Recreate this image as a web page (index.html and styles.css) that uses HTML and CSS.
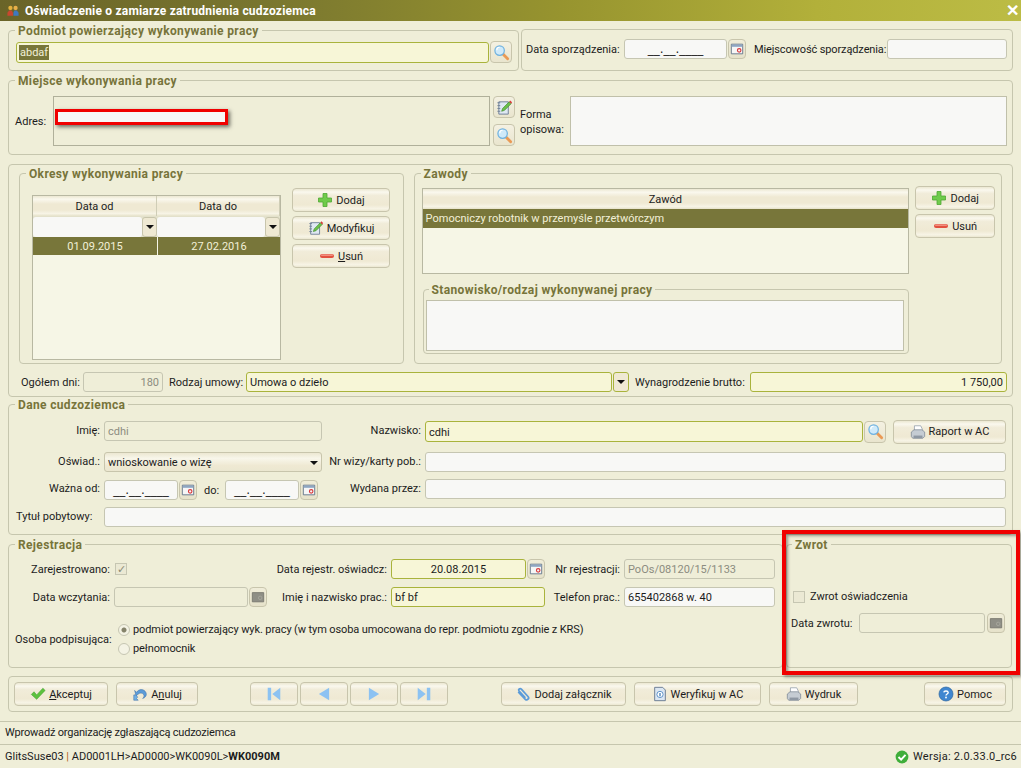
FILE: index.html
```html
<!DOCTYPE html>
<html lang="pl">

<head>
    <meta charset="UTF-8">
    <title>Oświadczenie o zamiarze zatrudnienia cudzoziemca</title>
    <link rel="stylesheet" href="styles.css">
</head>

<body>
    <svg class="defs" xmlns="http://www.w3.org/2000/svg">
        <symbol id="i-search" viewBox="0 0 18 18">
            <path d="M10.500 10.500l5 5" stroke="#ea9a55" stroke-width="3" stroke-linecap="round"/>
            <circle cx="7" cy="7" r="5" fill="#cfeafa" stroke="#6fb2e0" stroke-width="1.300"/>
            <path d="M4 6.500a3 3 0 0 1 3-3" fill="none" stroke="#fff" stroke-width="1.200"/>
        </symbol>
        <symbol id="i-edit" viewBox="0 0 18 18">
            <path d="M3 3h10v13H3z" fill="#dfe8f2" stroke="#6f7f96"/>
            <path d="M1.500 4h3M1.500 7h3M1.500 10h3M1.500 13h3" stroke="#6f7f96"/>
            <path d="M6 13l1-3 7-7 2 2-7 7z" fill="#6cc04a" stroke="#3d8a2a" stroke-width=".7"/>
            <path d="M14 3l1-1.500 2 2-1 1.500z" fill="#d9383a"/>
        </symbol>
        <symbol id="i-cal" viewBox="0 0 16 16">
            <path d="M1.500 2.500h13v11h-13z" fill="#f6f6f6" stroke="#5c6f86"/>
            <path d="M2 3h12v2.500H2z" fill="#8ea6c2"/>
            <circle cx="10.500" cy="9.500" r="2" fill="none" stroke="#d9383a" stroke-width="1.300"/>
        </symbol>
        <symbol id="i-cal-off" viewBox="0 0 16 16">
            <path d="M1.500 3h13v10.500h-13z" fill="#8f8f86" stroke="#77776e"/>
            <circle cx="10.500" cy="9" r="2" fill="none" stroke="#a8a89e"/>
        </symbol>
        <symbol id="i-plus" viewBox="0 0 16 16">
            <path d="M6 1.500h4v4.500h4.500v4H10v4.500H6V10H1.500V6H6z" fill="#6fcb4b" stroke="#4ea732" stroke-width=".8"/>
        </symbol>
        <symbol id="i-minus" viewBox="0 0 16 16">
            <rect x="1" y="6" width="14" height="4" rx="2" fill="#e2503f"/>
            <rect x="2" y="6.500" width="12" height="1.200" rx=".6" fill="#f6a394"/>
        </symbol>
        <symbol id="i-print" viewBox="0 0 18 18">
            <path d="M5 2h7l2 4v3H5z" fill="#fff" stroke="#8a97a5" stroke-width=".8"/>
            <path d="M1.500 9l3-2.500h9l3 2.500v5l-2 2H3l-1.500-2z" fill="#c5ccd3" stroke="#78838f" stroke-width=".8"/>
            <path d="M4 13h10v3H4z" fill="#8e98a3"/>
        </symbol>
        <symbol id="i-check" viewBox="0 0 18 18">
            <path d="M1.500 9.500l3-3 3 3.500 7-7.500 2.500 2.500-9.500 10z" fill="#5cc23e" stroke="#3f9a2a" stroke-width=".6"/>
        </symbol>
        <symbol id="i-undo" viewBox="0 0 18 18">
            <path d="M3 5l1.500 6 2-1.500c2-2 5-2 6.500 0 1 1.500.5 3-1 4.500 3.500-1 5-4 3.500-7C13.500 3.500 9 3 6 6L5 7z" fill="#5b9bd8" stroke="#386ea8" stroke-width=".6"/>
            <path d="M2 10v6h5l-2-2 1.500-1.500L4 10z" fill="#6fb0e6" stroke="#386ea8" stroke-width=".6"/>
        </symbol>
        <symbol id="i-first" viewBox="0 0 14 14">
            <path d="M1.500 1.500h3v11h-3zM12.500 1.500v11L5.500 7z" fill="#8cc2f2"/>
        </symbol>
        <symbol id="i-prev" viewBox="0 0 14 14">
            <path d="M11.500 1.500v11L2.500 7z" fill="#8cc2f2"/>
        </symbol>
        <symbol id="i-next" viewBox="0 0 14 14">
            <path d="M2.500 1.500v11l9-5.500z" fill="#8cc2f2"/>
        </symbol>
        <symbol id="i-last" viewBox="0 0 14 14">
            <path d="M9.500 1.500h3v11h-3zM1.500 1.500v11L8.500 7z" fill="#8cc2f2"/>
        </symbol>
        <symbol id="i-clip" viewBox="0 0 18 18">
            <path d="M2.500 6.500l8 8.500c2 1.800 5 -1 3 -3.200L6 3.500C4.500 2 2 4 3.500 5.800l7 7.500" fill="none" stroke="#5b9bd8" stroke-width="2"/>
        </symbol>
        <symbol id="i-info" viewBox="0 0 18 18">
            <path d="M3 1.500h9l3 3v12H3z" fill="#dbe6f2" stroke="#62758c"/>
            <circle cx="9" cy="9.500" r="3.500" fill="#fff" stroke="#4f89c4"/>
            <path d="M9 8v3.500" stroke="#2f6cab" stroke-width="1.300"/>
        </symbol>
        <symbol id="i-help" viewBox="0 0 16 16">
            <circle cx="8" cy="8" r="7" fill="#3f86d0" stroke="#2a649f" stroke-width=".7"/>
            <path d="M5.800 6.300C6 4.500 10 4.500 10.200 6.500 10.300 8 8 8 8 9.500" fill="none" stroke="#fff" stroke-width="1.400"/>
            <circle cx="8" cy="11.500" r=".9" fill="#fff"/>
        </symbol>
        <symbol id="i-ok" viewBox="0 0 16 16">
            <circle cx="8" cy="8" r="7.300" fill="#3fae3a"/>
            <path d="M4 8l3 3 5-5.500" fill="none" stroke="#fff" stroke-width="2.200"/>
        </symbol>
        <symbol id="i-users" viewBox="0 0 14 14">
            <circle cx="4" cy="3.500" r="2.500" fill="#e3b03c"/>
            <circle cx="10" cy="3.500" r="2.500" fill="#e8b04a"/>
            <path d="M0.500 12.500V9l2-2.500h3L7 9v3.500z" fill="#c9472f"/>
            <path d="M7.500 12.500V9l1-2.500h3L13.500 9v3.500z" fill="#3f78c0"/>
        </symbol>
    </svg>

    <div class="titlebar">
        <svg class="title-icon"><use href="#i-users"/></svg>
        <span class="title-text">Oświadczenie o zamiarze zatrudnienia cudzoziemca</span>
        <span class="title-close">✕</span>
    </div>

    <div class="main">
        <div class="top-row">
            <fieldset class="group podmiot">
                <legend>Podmiot powierzający wykonywanie pracy</legend>
                <div class="flex-row">
                    <div class="field req grow"><span class="selected-text">abdaf</span></div>
                    <button class="icon-btn"><svg><use href="#i-search"/></svg></button>
                </div>
            </fieldset>
            <div class="group data-box">
                <label class="lbl-plain">Data sporządzenia:</label>
                <div class="field mask w-103">__.__.____</div>
                <button class="cal-btn"><svg><use href="#i-cal"/></svg></button>
                <label class="lbl-plain miejsc-label">Miejscowość sporządzenia:</label>
                <div class="field grow"></div>
            </div>
        </div>

        <fieldset class="group miejsce">
            <legend>Miejsce wykonywania pracy</legend>
            <div class="miejsce-grid">
                <label class="lbl-plain">Adres:</label>
                <div class="address-box"></div>
                <div class="address-btns">
                    <button class="icon-btn"><svg><use href="#i-edit"/></svg></button>
                    <button class="icon-btn"><svg><use href="#i-search"/></svg></button>
                </div>
                <label class="lbl-plain forma-label">Forma<br>opisowa:</label>
                <div class="memo"></div>
            </div>
            <div class="redact"></div>
        </fieldset>

        <div class="group panel">
            <div class="panel-cols">
                <fieldset class="group okresy">
                    <legend>Okresy wykonywania pracy</legend>
                    <div class="okresy-body">
                        <div class="table okresy-table">
                            <div class="thead two">
                                <div class="th">Data od</div>
                                <div class="th">Data do</div>
                            </div>
                            <div class="filter two">
                                <div class="filter-cell"><div class="filter-input"></div><div class="filter-btn"><i class="caret"></i></div></div>
                                <div class="filter-cell"><div class="filter-input"></div><div class="filter-btn"><i class="caret"></i></div></div>
                            </div>
                            <div class="tr-sel two">
                                <div class="td center">01.09.2015</div>
                                <div class="td center">27.02.2016</div>
                            </div>
                        </div>
                        <div class="btn-col okresy-btns">
                            <button class="btn"><svg class="ico"><use href="#i-plus"/></svg>Dodaj</button>
                            <button class="btn"><svg class="ico"><use href="#i-edit"/></svg>Modyfikuj</button>
                            <button class="btn"><svg class="ico"><use href="#i-minus"/></svg><span><u>U</u>suń</span></button>
                        </div>
                    </div>
                </fieldset>
                <fieldset class="group zawody">
                    <legend>Zawody</legend>
                    <div class="zawody-body">
                        <div class="zawody-left">
                            <div class="table zawod-table">
                                <div class="thead"><div class="th">Zawód</div></div>
                                <div class="tr-sel"><div class="td">Pomocniczy robotnik w przemyśle przetwórczym</div></div>
                            </div>
                            <fieldset class="group stanowisko">
                                <legend>Stanowisko/rodzaj wykonywanej pracy</legend>
                                <div class="memo stanowisko-memo"></div>
                            </fieldset>
                        </div>
                        <div class="btn-col zawody-btns">
                            <button class="btn"><svg class="ico"><use href="#i-plus"/></svg>Dodaj</button>
                            <button class="btn"><svg class="ico"><use href="#i-minus"/></svg>Usuń</button>
                        </div>
                    </div>
                </fieldset>
            </div>
            <div class="umowa-row">
                <label class="lbl-plain dni-label">Ogółem dni:</label>
                <div class="field off right w-80">180</div>
                <label class="lbl-plain rodzaj-label">Rodzaj umowy:</label>
                <div class="field req grow">Umowa o dzieło</div>
                <div class="combo-btn"><i class="caret"></i></div>
                <label class="lbl-plain wyn-label">Wynagrodzenie brutto:</label>
                <div class="field req right w-257">1 750,00</div>
            </div>
        </div>

        <fieldset class="group dane">
            <legend>Dane cudzoziemca</legend>
            <div class="dane-grid">
                <label class="lbl">Imię:</label>
                <div class="field off">cdhi</div>
                <label class="lbl">Nazwisko:</label>
                <div class="flex-row">
                    <div class="field req grow">cdhi</div>
                    <button class="icon-btn"><svg><use href="#i-search"/></svg></button>
                    <button class="btn raport"><svg class="ico"><use href="#i-print"/></svg>Raport w AC</button>
                </div>

                <label class="lbl">Oświad.:</label>
                <div class="combo">wnioskowanie o wizę<i class="caret"></i></div>
                <label class="lbl">Nr wizy/karty pob.:</label>
                <div class="field"></div>

                <label class="lbl">Ważna od:</label>
                <div class="flex-row">
                    <div class="field mask w-74">__.__.____</div>
                    <button class="cal-btn"><svg><use href="#i-cal"/></svg></button>
                    <label class="lbl-plain do-label">do:</label>
                    <div class="field mask w-74">__.__.____</div>
                    <button class="cal-btn"><svg><use href="#i-cal"/></svg></button>
                </div>
                <label class="lbl">Wydana przez:</label>
                <div class="field"></div>

                <label class="lbl-plain tytul-label">Tytuł pobytowy:</label>
                <div class="field span-3"></div>
            </div>
        </fieldset>

        <div class="reg-row">
            <fieldset class="group rejestracja">
                <legend>Rejestracja</legend>
                <div class="reg-grid">
                    <label class="lbl">Zarejestrowano:</label>
                    <div class="flex-row"><span class="check on">✓</span></div>
                    <label class="lbl">Data rejestr. oświadcz:</label>
                    <div class="flex-row">
                        <div class="field req date-center grow">20.08.2015</div>
                        <button class="cal-btn"><svg><use href="#i-cal"/></svg></button>
                    </div>
                    <label class="lbl">Nr rejestracji:</label>
                    <div class="field off">PoOs/08120/15/1133</div>

                    <label class="lbl">Data wczytania:</label>
                    <div class="flex-row">
                        <div class="field off grow"></div>
                        <button class="cal-btn"><svg><use href="#i-cal-off"/></svg></button>
                    </div>
                    <label class="lbl">Imię i nazwisko prac.:</label>
                    <div class="field req">bf bf</div>
                    <label class="lbl">Telefon prac.:</label>
                    <div class="field">655402868 w. 40</div>

                    <label class="lbl osoba-label">Osoba podpisująca:</label>
                    <div class="radios">
                        <div class="radio-row"><span class="radio on"></span>podmiot powierzający wyk. pracy (w tym osoba umocowana do repr. podmiotu zgodnie z KRS)</div>
                        <div class="radio-row"><span class="radio"></span>pełnomocnik</div>
                    </div>
                </div>
            </fieldset>
            <fieldset class="group zwrot">
                <legend>Zwrot</legend>
                <div class="zwrot-check"><span class="check"></span>Zwrot oświadczenia</div>
                <div class="zwrot-date">
                    <label class="lbl-plain">Data zwrotu:</label>
                    <div class="field off"></div>
                    <button class="cal-btn"><svg><use href="#i-cal-off"/></svg></button>
                </div>
            </fieldset>
            <div class="red-frame"></div>
        </div>

        <div class="group toolbar">
            <button class="btn w-94"><svg class="ico"><use href="#i-check"/></svg><span><u>A</u>kceptuj</span></button>
            <button class="btn w-82"><svg class="ico"><use href="#i-undo"/></svg><span>A<u>n</u>uluj</span></button>
            <div class="nav-btns">
                <button class="btn w-48"><svg class="ico"><use href="#i-first"/></svg></button>
                <button class="btn w-48"><svg class="ico"><use href="#i-prev"/></svg></button>
                <button class="btn w-48"><svg class="ico"><use href="#i-next"/></svg></button>
                <button class="btn w-48"><svg class="ico"><use href="#i-last"/></svg></button>
            </div>
            <button class="btn w-125"><svg class="ico"><use href="#i-clip"/></svg>Dodaj załącznik</button>
            <button class="btn w-127"><svg class="ico"><use href="#i-info"/></svg>Weryfikuj w AC</button>
            <button class="btn w-89"><svg class="ico"><use href="#i-print"/></svg>Wydruk</button>
            <button class="btn w-82 pomoc"><svg class="ico"><use href="#i-help"/></svg>Pomoc</button>
        </div>
    </div>

    <div class="hint">Wprowadź organizację zgłaszającą cudzoziemca</div>
    <div class="statusbar">
        <span>GlitsSuse03 <span class="sep">|</span> AD0001LH&gt;AD0000&gt;WK0090L&gt;<b>WK0090M</b></span>
        <span class="version"><svg class="ok-icon"><use href="#i-ok"/></svg>Wersja: 2.0.33.0_rc6</span>
    </div>
</body>

</html>
```

FILE: styles.css
```css
* {
    box-sizing: border-box;
    margin: 0;
    padding: 0;
}

html,
body {
    height: 768px;
    overflow: hidden;
}

body {
    font-family: Roboto, "Noto Sans", sans-serif;
    font-size: 11px;
    line-height: 14px;
    color: #1c1c1c;
    background-color: #efeed8;
}

.defs {
    display: none;
}

/* title bar */
.titlebar {
    display: flex;
    align-items: center;
    height: 21px;
    padding: 0 2px 0 7px;
    color: #fff;
    background: linear-gradient(90deg, #6a6428 0%, #78752f 25%, #97942f 55%, #b2b03a 80%, #bcbc45 100%);
}

.title-icon {
    width: 12px;
    height: 12px;
    margin-right: 6px;
}

.title-text {
    flex: 1;
    font-size: 12px;
    font-weight: bold;
    letter-spacing: 0.2px;
}

.title-close {
    font-size: 16px;
    font-weight: bold;
}

.main {
    padding: 2px 8px 0;
}

/* groups */
.group {
    border: 1px solid #c6c6ae;
    border-radius: 4px;
    min-width: 0;
}

.group legend {
    height: 14px;
    padding: 0 3px;
    font-size: 12px;
    line-height: 17px;
    font-weight: bold;
    letter-spacing: 0.35px;
    color: #77743a;
}

.flex-row {
    display: flex;
    align-items: center;
}

.grow {
    flex: 1;
    min-width: 0;
}

/* fields */
.field {
    height: 20px;
    padding: 0 3px;
    line-height: 20px;
    white-space: nowrap;
    background-color: #f8f8f6;
    border: 1px solid #c6c6b2;
    border-radius: 3px;
}

.field.req {
    background-color: #f7f6d7;
    border-color: #a9b33c;
}

.field.off {
    color: #8c8c80;
    background-color: transparent;
}

.right {
    text-align: right;
}

.date-center {
    text-align: center;
}

.mask {
    font-family: "DejaVu Sans", sans-serif;
    font-size: 12px;
    line-height: 18px;
    text-align: center;
}

.mask.w-74 {
    padding: 0;
}

.selected-text {
    display: inline-block;
    height: 15px;
    line-height: 15px;
    padding: 0 1px;
    margin: 2px 0 0 -1px;
    vertical-align: top;
    color: #f2f0d8;
    background-color: #78763a;
}

.w-74 { width: 74px; }
.w-80 { width: 80px; }
.w-103 { width: 103px; }
.w-257 { width: 257px; }
.w-48 { width: 48px; }
.w-82 { width: 82px; }
.w-89 { width: 89px; }
.w-94 { width: 94px; }
.w-125 { width: 125px; }
.w-127 { width: 127px; }

.lbl {
    padding: 2px 4px 0 0;
    text-align: right;
    white-space: nowrap;
}

.lbl-plain {
    padding-top: 2px;
    white-space: nowrap;
}

/* buttons */
button {
    font: inherit;
    color: inherit;
}

.btn {
    display: flex;
    align-items: center;
    justify-content: center;
    gap: 3px;
    height: 24px;
    padding-top: 1px;
    border: 1px solid #c8c5ac;
    border-radius: 4px;
    background: linear-gradient(#ece8d2 0%, #faf8ee 14%, #f1ecd9 30%, #efe9d3 72%, #f7f4e6 90%, #ebe7d0 100%);
}

.btn .ico {
    width: 16px;
    height: 16px;
    flex-shrink: 0;
    margin-top: -1px;
}

.icon-btn {
    display: flex;
    align-items: center;
    justify-content: center;
    width: 22px;
    height: 22px;
    flex-shrink: 0;
    border: 1px solid #c8c5ac;
    border-radius: 4px;
    background: linear-gradient(#f4f1e2, #e9e5ce);
}

.icon-btn svg {
    width: 17px;
    height: 17px;
}

.cal-btn {
    display: flex;
    align-items: center;
    justify-content: center;
    width: 18px;
    height: 20px;
    margin-left: 1px;
    flex-shrink: 0;
    border: 1px solid #c8c5ac;
    border-radius: 4px;
    background: linear-gradient(#f0edd9, #e6e2ca);
}

.cal-btn svg {
    width: 14px;
    height: 14px;
}

.caret {
    display: inline-block;
    width: 0;
    height: 0;
    border-left: 4px solid transparent;
    border-right: 4px solid transparent;
    border-top: 4px solid #111;
}

/* row 1 */
.top-row {
    display: flex;
    align-items: flex-start;
    gap: 2px;
}

.podmiot {
    width: 511px;
    height: 48px;
    padding: 4px 6px 0 7px;
}

.podmiot legend {
    margin-left: -1px;
}

.podmiot .field {
    height: 21px;
    line-height: 21px;
}

.podmiot .icon-btn {
    margin-left: 1px;
}

.data-box {
    display: flex;
    align-items: center;
    width: 492px;
    height: 42px;
    margin-top: 6px;
    padding: 0 5px 2px 4px;
}

.data-box .lbl-plain:first-child {
    width: 98px;
}

.miejsc-label {
    width: 133px;
    margin-left: 8px;
    letter-spacing: -0.12px;
}

/* Miejsce */
.miejsce {
    position: relative;
    height: 82px;
    margin-top: 2px;
    padding: 9px 5px 0 6px;
}

.miejsce-grid {
    display: grid;
    grid-template-columns: 38px 437px 25px 55px 1fr;
    align-items: center;
}

.address-box {
    height: 50px;
    border: 1px solid #b0b09a;
}

.address-btns {
    display: flex;
    flex-direction: column;
    gap: 6px;
    margin-left: 3px;
}

.forma-label {
    margin-left: 5px;
    line-height: 15px;
}

.memo {
    height: 50px;
    background-color: #f8f8f6;
    border: 1px solid #c0c0aa;
}

.redact {
    position: absolute;
    left: 46px;
    top: 22px;
    width: 173px;
    height: 16px;
    background-color: #f7f7f7;
    border: 3px solid #f00000;
    box-shadow: 2px 2px 4px rgba(0, 0, 0, 0.55);
}

/* large panel */
.panel {
    height: 233px;
    margin-top: 9px;
    padding: 1px 10px 0;
}

.panel-cols {
    display: flex;
    gap: 10px;
}

.okresy {
    width: 385px;
    height: 198px;
    padding: 0 0 0 12px;
}

.okresy legend {
    margin-left: -6px;
}

.okresy-body {
    display: flex;
    align-items: flex-start;
}

.table {
    background-color: #f6f6e6;
    border: 1px solid #b8b8a2;
}

.okresy-table {
    width: 249px;
    height: 165px;
    margin-top: 15px;
}

.two {
    display: grid;
    grid-template-columns: 124px 1fr;
}

.thead {
    height: 20px;
}

.th {
    height: 20px;
    line-height: 21px;
    text-align: center;
    border-right: 1px solid #cfcdb6;
    background: linear-gradient(#ece8d2 0%, #faf8ee 16%, #efe9d3 40%, #efe9d3 70%, #f7f4e6 88%, #e6e2ca 100%);
}

.filter {
    height: 21px;
    padding-top: 1px;
    background-color: #e3e1cb;
}

.filter-cell {
    display: flex;
    align-items: stretch;
}

.filter-input {
    flex: 1;
    background-color: #f8f8f6;
    border-radius: 3px;
}

.filter-btn {
    display: flex;
    align-items: center;
    justify-content: center;
    width: 15px;
    border-radius: 3px;
    background-color: #efe9d3;
    border: 1px solid #c8c5ac;
}

.tr-sel {
    height: 18px;
    color: #f2f0d8;
    background-color: #78763a;
}

.td {
    padding: 0 3px;
    line-height: 19px;
}

.td + .td {
    border-left: 1px solid #f6f6e6;
}

.center {
    text-align: center;
}

.btn-col {
    display: flex;
    flex-direction: column;
    gap: 4px;
}

.okresy-btns {
    width: 98px;
    margin: 8px 0 0 11px;
}

.zawody {
    width: 589px;
    height: 198px;
    padding: 0 6px 0 7px;
}

.zawody > legend {
    margin-left: -1px;
}

.zawody-body {
    display: flex;
    align-items: flex-start;
}

.zawody-left {
    width: 489px;
}

.zawod-table {
    height: 86px;
    margin-top: 8px;
}

.zawod-table .th {
    border-right: 0;
}

.zawod-table .tr-sel {
    height: 19px;
}

.stanowisko {
    height: 72px;
    margin: 8px 0 0 1px;
    padding: 4px 4px 0 2px;
}

.stanowisko legend {
    margin-left: 3px;
}

.stanowisko-memo {
    height: 51px;
}

.zawody-btns {
    width: 80px;
    margin: 6px 0 0 6px;
}

.umowa-row {
    display: flex;
    align-items: center;
    height: 21px;
    margin-top: 7px;
    margin-right: -5px;
    padding-left: 2px;
}

.dni-label {
    width: 62px;
}

.rodzaj-label {
    width: 77px;
    margin-left: 6px;
}

.wyn-label {
    width: 115px;
    margin-left: 6px;
}

.combo-btn {
    display: flex;
    align-items: center;
    justify-content: center;
    width: 16px;
    height: 20px;
    margin-left: 1px;
    border: 1px solid #a9b33c;
    border-radius: 3px;
    background-color: #efe9d3;
}

/* Dane cudzoziemca */
.dane {
    height: 138px;
    padding: 10px 6px 0;
}

.dane-grid {
    display: grid;
    grid-template-columns: 89px 218px 103px 1fr;
    grid-template-rows: 31px 27px 28px 20px;
    align-items: start;
}

.dane-grid > .lbl,
.dane-grid > .lbl-plain {
    padding-top: 3px;
}

.dane-grid .field.req {
    height: 21px;
    line-height: 21px;
}

.dane-grid .flex-row {
    height: 21px;
}

.dane-grid .icon-btn {
    margin-left: 1px;
}

.raport {
    flex-shrink: 0;
    width: 113px;
    margin-left: 7px;
}

.combo {
    display: flex;
    align-items: center;
    justify-content: space-between;
    height: 20px;
    padding: 1px 3px 0;
    border: 1px solid #c8c5ac;
    border-radius: 3px;
    background: linear-gradient(#ece8d2, #f8f6ea 30%, #efe9d3 70%, #ebe7d0);
}

.do-label {
    width: 21px;
    margin-left: 7px;
}

.tytul-label {
    margin-left: 1px;
}

.span-3 {
    grid-column: span 3;
}

/* Rejestracja */
.reg-row {
    position: relative;
    display: flex;
    gap: 3px;
    margin-top: 2px;
}

.rejestracja {
    width: 775px;
    height: 131px;
    padding: 8px 6px 0;
}

.reg-grid {
    display: grid;
    grid-template-columns: 99px 153px 124px 154px 79px 151px;
    grid-template-rows: 20px 20px 34px;
    row-gap: 8px;
    align-items: center;
}

.reg-grid .radios {
    grid-column: span 5;
    margin-top: 17px;
}

.osoba-label {
    margin-top: 14px;
}

.check {
    display: inline-block;
    width: 12px;
    height: 12px;
    line-height: 11px;
    text-align: center;
    font-size: 11px;
    color: #8b8b74;
    background-color: #ebe9d4;
    border: 1px solid #c6c6b2;
}

.reg-grid .check {
    margin-left: 1px;
}

.radio-row {
    display: flex;
    align-items: center;
    height: 17px;
    margin-bottom: 2px;
    margin-left: 4px;
    letter-spacing: -0.1px;
    white-space: nowrap;
}

.radio {
    width: 12px;
    height: 12px;
    margin-right: 3px;
    border: 1px solid #c6c6b2;
    border-radius: 50%;
    background-color: #f4f3e4;
}

.radio.on {
    background: radial-gradient(circle, #85836a 0, #85836a 2px, #f4f3e4 3px);
}

.zwrot {
    flex: 1;
    height: 131px;
    margin-right: 1px;
    padding: 0 7px 0 4px;
}

.zwrot legend {
    margin-left: 1px;
}

.zwrot-check {
    display: flex;
    align-items: center;
    gap: 5px;
    height: 16px;
    margin: 38px 0 0 2px;
}

.zwrot-date {
    display: grid;
    grid-template-columns: 68px 126px 19px;
    align-items: center;
    margin-top: 8px;
}

.zwrot-date .cal-btn {
    margin-left: 2px;
}

.red-frame {
    position: absolute;
    left: 774px;
    top: -7px;
    width: 238px;
    height: 145px;
    border: 4px solid #f00000;
    box-shadow: inset 2px 2px 3px rgba(0, 0, 0, 0.35), 2px 2px 3px rgba(0, 0, 0, 0.35);
}

/* bottom toolbar */
.toolbar {
    display: flex;
    align-items: center;
    height: 36px;
    margin-top: 8px;
    padding: 0 6px 0 5px;
}

.toolbar .btn + .btn {
    margin-left: 8px;
}

.toolbar .btn.pomoc {
    margin-left: auto;
}

.nav-btns {
    display: flex;
    gap: 2px;
    margin: 0 53px 0 52px;
}

.nav-btns .btn + .btn {
    margin-left: 0;
}

/* hint and status bar */
.hint {
    height: 23px;
    margin-top: 9px;
    padding-left: 5px;
    line-height: 21px;
    letter-spacing: -0.2px;
    border-top: 1px solid #c6c6ae;
}

.statusbar {
    display: flex;
    align-items: center;
    justify-content: space-between;
    height: 24px;
    padding: 0 4px 0 5px;
    border-top: 1px solid #c6c6ae;
}

.sep {
    color: #b5651d;
}

.version {
    display: flex;
    align-items: center;
    gap: 4px;
    letter-spacing: 0.25px;
}

.ok-icon {
    width: 14px;
    height: 14px;
}
```
